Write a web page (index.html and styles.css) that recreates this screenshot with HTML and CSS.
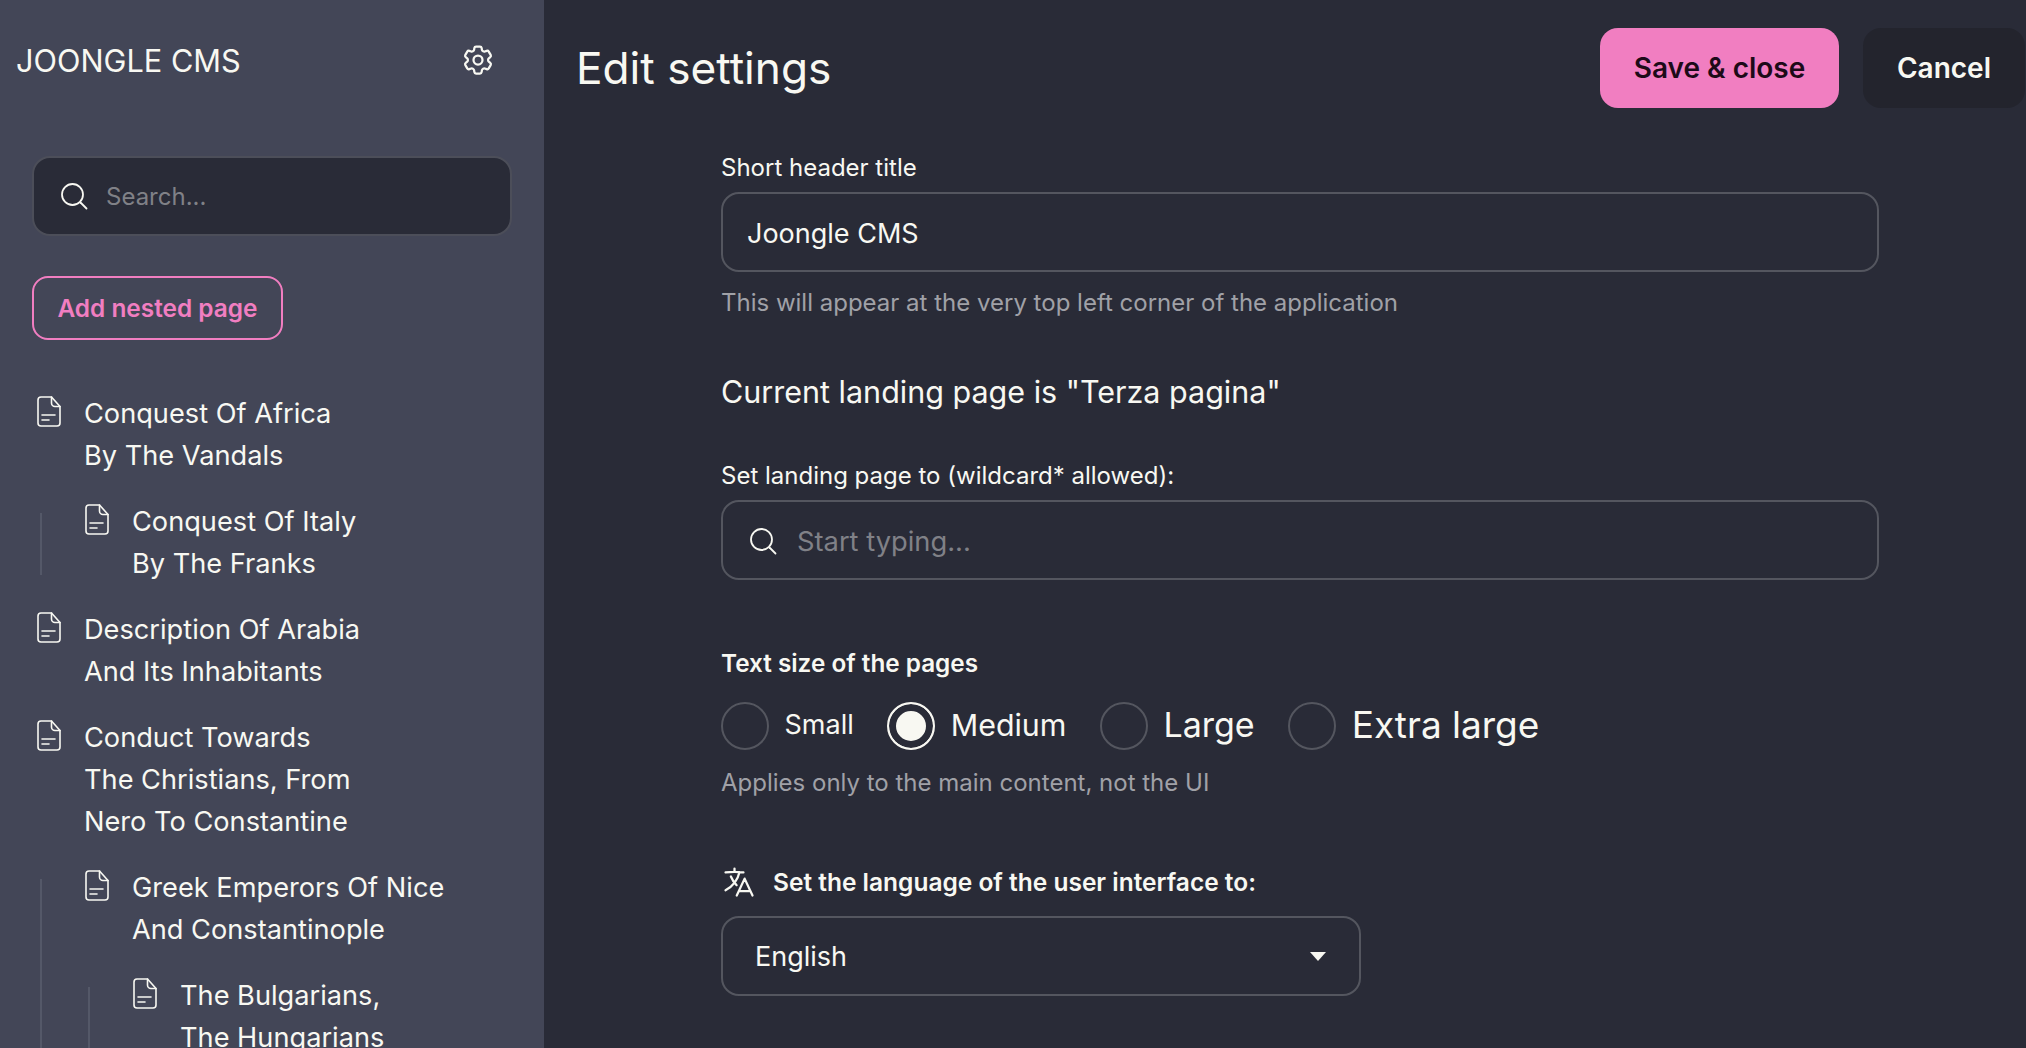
FILE: index.html
```html
<!DOCTYPE html>
<html lang="en">
<head>
    <meta charset="UTF-8">
    <meta name="viewport" content="width=device-width, initial-scale=1.0">
    <title>Edit settings</title>
    <link rel="stylesheet" href="styles.css">
</head>
<body>
    <div class="app">
        <aside class="sidebar">
            <div class="brand">
                <span class="brand-title">JOONGLE CMS</span>
                <svg class="gear" viewBox="0 0 24 24" fill="none" stroke="currentColor" stroke-width="1.5" stroke-linecap="round" stroke-linejoin="round">
                    <path d="M9.594 3.94c.09-.542.56-.94 1.11-.94h2.593c.55 0 1.02.398 1.11.94l.213 1.281c.063.374.313.686.645.87.074.04.147.083.22.127.324.196.72.257 1.075.124l1.217-.456a1.125 1.125 0 011.37.49l1.296 2.247a1.125 1.125 0 01-.26 1.431l-1.003.827c-.293.24-.438.613-.431.992a6.759 6.759 0 010 .255c-.007.378.138.75.43.99l1.005.828c.424.35.534.954.26 1.43l-1.298 2.247a1.125 1.125 0 01-1.369.491l-1.217-.456c-.355-.133-.75-.072-1.076.124a6.57 6.57 0 01-.22.128c-.331.183-.581.495-.644.869l-.213 1.28c-.09.543-.56.941-1.11.941h-2.594c-.55 0-1.02-.398-1.11-.94l-.213-1.281c-.062-.374-.312-.686-.644-.87a6.52 6.52 0 01-.22-.127c-.325-.196-.72-.257-1.076-.124l-1.217.456a1.125 1.125 0 01-1.369-.49l-1.297-2.247a1.125 1.125 0 01.26-1.431l1.004-.827c.292-.24.437-.613.43-.992a6.932 6.932 0 010-.255c.007-.378-.138-.75-.43-.99l-1.004-.828a1.125 1.125 0 01-.26-1.43l1.297-2.247a1.125 1.125 0 011.37-.491l1.216.456c.356.133.751.072 1.076-.124.072-.044.146-.087.22-.128.332-.183.582-.495.644-.869l.214-1.281z"/>
                    <circle cx="12" cy="12" r="3"/>
                </svg>
            </div>

            <div class="search-box">
                <svg class="search-icon" viewBox="0 0 28 28" fill="none" stroke="currentColor" stroke-width="1.8" stroke-linecap="round">
                    <circle cx="12.5" cy="12.5" r="10.5"/>
                    <path d="M20.5 20.5l6 6"/>
                </svg>
                <input class="search-input" type="text" placeholder="Search...">
            </div>

            <button class="add-btn">Add nested page</button>

            <ul class="tree">
                <li class="tree-item">
                    <svg class="doc" viewBox="0 0 24 31" fill="none" stroke="currentColor" stroke-width="1.6" stroke-linecap="round" stroke-linejoin="round"><path d="M4 1h10.500L23 10.500V27a3 3 0 0 1-3 3H4a3 3 0 0 1-3-3V4a3 3 0 0 1 3-3z"/><path d="M14.500 1v6a3.500 3.500 0 0 0 3.500 3.500h5M5 19h13M5 24h7"/></svg>
                    <span>Conquest Of Africa<br>By The Vandals</span>
                </li>
                <li>
                    <ul class="tree-nested">
                        <li class="tree-item">
                            <svg class="doc" viewBox="0 0 24 31" fill="none" stroke="currentColor" stroke-width="1.6" stroke-linecap="round" stroke-linejoin="round"><path d="M4 1h10.500L23 10.500V27a3 3 0 0 1-3 3H4a3 3 0 0 1-3-3V4a3 3 0 0 1 3-3z"/><path d="M14.500 1v6a3.500 3.500 0 0 0 3.500 3.500h5M5 19h13M5 24h7"/></svg>
                            <span>Conquest Of Italy<br>By The Franks</span>
                        </li>
                    </ul>
                </li>
                <li class="tree-item">
                    <svg class="doc" viewBox="0 0 24 31" fill="none" stroke="currentColor" stroke-width="1.6" stroke-linecap="round" stroke-linejoin="round"><path d="M4 1h10.500L23 10.500V27a3 3 0 0 1-3 3H4a3 3 0 0 1-3-3V4a3 3 0 0 1 3-3z"/><path d="M14.500 1v6a3.500 3.500 0 0 0 3.500 3.500h5M5 19h13M5 24h7"/></svg>
                    <span>Description Of Arabia<br>And Its Inhabitants</span>
                </li>
                <li class="tree-item">
                    <svg class="doc" viewBox="0 0 24 31" fill="none" stroke="currentColor" stroke-width="1.6" stroke-linecap="round" stroke-linejoin="round"><path d="M4 1h10.500L23 10.500V27a3 3 0 0 1-3 3H4a3 3 0 0 1-3-3V4a3 3 0 0 1 3-3z"/><path d="M14.500 1v6a3.500 3.500 0 0 0 3.500 3.500h5M5 19h13M5 24h7"/></svg>
                    <span>Conduct Towards<br>The Christians, From<br>Nero To Constantine</span>
                </li>
                <li>
                    <ul class="tree-nested">
                        <li class="tree-item">
                            <svg class="doc" viewBox="0 0 24 31" fill="none" stroke="currentColor" stroke-width="1.6" stroke-linecap="round" stroke-linejoin="round"><path d="M4 1h10.500L23 10.500V27a3 3 0 0 1-3 3H4a3 3 0 0 1-3-3V4a3 3 0 0 1 3-3z"/><path d="M14.500 1v6a3.500 3.500 0 0 0 3.500 3.500h5M5 19h13M5 24h7"/></svg>
                            <span>Greek Emperors Of Nice<br>And Constantinople</span>
                        </li>
                        <li>
                            <ul class="tree-nested">
                                <li class="tree-item">
                                    <svg class="doc" viewBox="0 0 24 31" fill="none" stroke="currentColor" stroke-width="1.6" stroke-linecap="round" stroke-linejoin="round"><path d="M4 1h10.500L23 10.500V27a3 3 0 0 1-3 3H4a3 3 0 0 1-3-3V4a3 3 0 0 1 3-3z"/><path d="M14.500 1v6a3.500 3.500 0 0 0 3.500 3.500h5M5 19h13M5 24h7"/></svg>
                                    <span>The Bulgarians,<br>The Hungarians</span>
                                </li>
                            </ul>
                        </li>
                    </ul>
                </li>
            </ul>
        </aside>

        <main class="content">
            <header class="topbar">
                <h1 class="page-title">Edit settings</h1>
                <div class="actions">
                    <button class="btn btn-save">Save &amp; close</button>
                    <button class="btn btn-cancel">Cancel</button>
                </div>
            </header>

            <form class="settings">
                <label class="field-label" for="short-title">Short header title</label>
                <input class="text-field" id="short-title" type="text" value="Joongle CMS">
                <p class="hint">This will appear at the very top left corner of the application</p>

                <h2 class="landing-title">Current landing page is "Terza pagina"</h2>

                <label class="field-label" for="landing">Set landing page to (wildcard* allowed):</label>
                <div class="text-field search-field">
                    <svg class="search-icon" viewBox="0 0 28 28" fill="none" stroke="currentColor" stroke-width="1.8" stroke-linecap="round">
                        <circle cx="12.5" cy="12.5" r="10.5"/>
                        <path d="M20.5 20.5l6 6"/>
                    </svg>
                    <input class="search-input" id="landing" type="text" placeholder="Start typing...">
                </div>

                <div class="size-label">Text size of the pages</div>
                <div class="radios">
                    <label class="radio"><input type="radio" name="size"><span class="size-s">Small</span></label>
                    <label class="radio"><input type="radio" name="size" checked><span class="size-m">Medium</span></label>
                    <label class="radio"><input type="radio" name="size"><span class="size-l">Large</span></label>
                    <label class="radio"><input type="radio" name="size"><span class="size-xl">Extra large</span></label>
                </div>
                <p class="hint">Applies only to the main content, not the UI</p>

                <div class="lang-label">
                    <svg class="lang-icon" viewBox="0 0 24 24" fill="none" stroke="currentColor" stroke-width="1.5" stroke-linecap="round" stroke-linejoin="round">
                        <path d="M10.5 21l5.25-11.25L21 21m-9-3h7.500M3 5.621a48.474 48.474 0 016-.371m0 0c1.120 0 2.233.038 3.334.114M9 5.250V3m3.334 2.364C11.176 10.658 7.690 15.080 3 17.502m9.334-12.138c.896.061 1.785.147 2.666.257m-4.589 8.495a18.023 18.023 0 01-3.827-5.802"/>
                    </svg>
                    <span>Set the language of the user interface to:</span>
                </div>
                <div class="select">
                    <span>English</span>
                    <svg class="caret" viewBox="0 0 16 9"><path d="M0 0h16L8 9z" fill="currentColor"/></svg>
                </div>
            </form>
        </main>
    </div>
</body>
</html>
```

FILE: styles.css
```css
* {
    box-sizing: border-box;
}
html, body {
    height: 100%;
}
body {
    margin: 0;
    overflow: hidden;
    font-family: 'Inter', 'Liberation Sans', sans-serif;
    background-color: #292b37;
    color: #f8f8f2;
}
button, input {
    font-family: inherit;
}
.app {
    display: flex;
    height: 100vh;
}

/* sidebar */
.sidebar {
    flex: 0 0 544px;
    height: 100%;
    overflow: hidden;
    background-color: #434657;
}
.brand {
    display: flex;
    align-items: center;
    justify-content: space-between;
    height: 120px;
    padding: 0 48px 0 16px;
}
.brand-title {
    font-size: 30.7px;
}
.gear {
    width: 36px;
    height: 36px;
}
.search-box {
    display: flex;
    align-items: center;
    gap: 18px;
    width: 480px;
    height: 80px;
    margin: 36px 0 0 32px;
    padding: 0 26px;
    background-color: #292b37;
    border: 2px solid #4c4e59;
    border-radius: 18px;
}
.search-icon {
    flex: none;
    width: 28px;
    height: 28px;
}
.search-input {
    flex: 1;
    min-width: 0;
    padding: 0;
    border: none;
    outline: none;
    background: transparent;
    color: #f8f8f2;
    font-size: 24px;
}
.search-input::placeholder {
    color: #808187;
    opacity: 1;
}
.add-btn {
    display: block;
    width: 251px;
    height: 64px;
    margin: 40px 0 0 32px;
    padding: 0;
    background: transparent;
    border: 2px solid #f17ec1;
    border-radius: 16px;
    color: #f17ec1;
    font-size: 24.4px;
    font-weight: 600;
}
.tree, .tree-nested {
    list-style: none;
    margin: 0;
    padding: 0;
}
.tree {
    margin: 53px 0 0 37px;
    font-size: 27.2px;
    line-height: 42px;
}
.tree-item {
    display: flex;
    gap: 23px;
    margin-bottom: 24px;
}
.doc {
    flex: none;
    width: 24px;
    height: 31px;
    margin-top: 3px;
}
.tree-nested {
    position: relative;
    padding-left: 48px;
}
.tree-nested::before {
    content: "";
    position: absolute;
    left: 3px;
    top: 12px;
    bottom: 10px;
    width: 2px;
    background-color: #545868;
}

/* main */
.content {
    flex: 1;
    min-width: 0;
}
.topbar {
    display: flex;
    align-items: center;
    justify-content: space-between;
    height: 80px;
    margin-top: 28px;
    padding: 0 1px 0 32px;
}
.page-title {
    margin: 0;
    font-size: 44.2px;
    font-weight: 400;
}
.actions {
    display: flex;
    gap: 24px;
}
.btn {
    height: 80px;
    padding: 0;
    border: none;
    border-radius: 18px;
    font-size: 28px;
    font-weight: 600;
}
.btn-save {
    width: 239px;
    background-color: #f17ec1;
    color: #1d0a18;
}
.btn-cancel {
    width: 162px;
    background-color: #23242d;
    color: #f8f8f2;
}
.settings {
    width: 1158px;
    margin: 0 0 0 177px;
    padding-top: 45px;
}
.field-label {
    display: block;
    font-size: 24px;
    line-height: 30px;
}
.text-field {
    display: block;
    width: 100%;
    height: 80px;
    margin-top: 9px;
    padding: 2px 24px 0;
    background: transparent;
    border: 2px solid #54565f;
    border-radius: 18px;
    color: #f8f8f2;
    font-size: 27px;
    outline: none;
}
.hint {
    margin: 16px 0 0;
    color: #a0a1a7;
    font-size: 24px;
    line-height: 30px;
}
.landing-title {
    margin: 55px 0 0;
    font-size: 30.5px;
    font-weight: 400;
    line-height: 38px;
}
.landing-title + .field-label {
    margin-top: 50px;
}
.search-field {
    display: flex;
    align-items: center;
    gap: 20px;
    padding-left: 26px;
}
.search-field .search-input {
    font-size: 27.3px;
}
.size-label {
    margin-top: 68px;
    font-size: 24.3px;
    font-weight: 600;
    line-height: 30px;
}
.radios {
    display: flex;
    align-items: center;
    gap: 33.5px;
    height: 50px;
    margin-top: 23px;
}
.radio {
    display: flex;
    align-items: center;
    gap: 15.5px;
}
.radio span {
    padding-bottom: 3px;
}
.radio input {
    appearance: none;
    flex: none;
    width: 48px;
    height: 48px;
    margin: 0;
    border: 2px solid #54565f;
    border-radius: 50%;
}
.radio input:checked {
    border-color: #f8f8f2;
    background-color: #f8f8f2;
    box-shadow: inset 0 0 0 7px #292b37;
}
.size-s { font-size: 27px; }
.size-m { font-size: 30.4px; }
.size-l { font-size: 34px; }
.size-xl { font-size: 37px; }
.radios + .hint {
    margin-top: 17px;
}
.lang-label {
    display: flex;
    align-items: center;
    gap: 16px;
    margin-top: 66px;
    font-size: 24.5px;
    font-weight: 600;
}
.lang-icon {
    flex: none;
    width: 36px;
    height: 36px;
}
.select {
    display: flex;
    align-items: center;
    justify-content: space-between;
    width: 640px;
    height: 80px;
    margin-top: 16px;
    padding: 0 33px 0 32px;
    border: 2px solid #54565f;
    border-radius: 18px;
    font-size: 27px;
}
.caret {
    width: 16px;
    height: 9px;
}
```
